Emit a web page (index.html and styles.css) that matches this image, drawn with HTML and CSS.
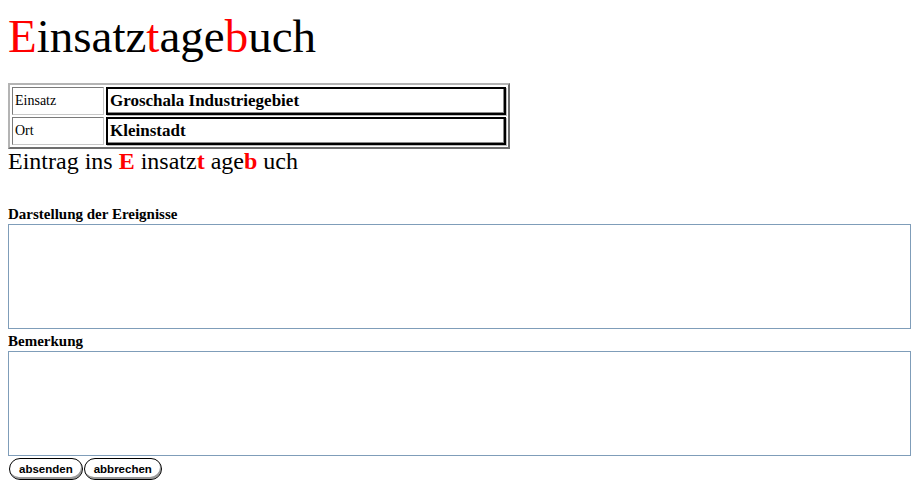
FILE: index.html
```html
<!DOCTYPE html>
<html lang="de">
<head>
<meta charset="utf-8">
<title>Einsatztagebuch</title>
<link rel="stylesheet" href="styles.css">
</head>
<body>
<h1 class="title"><span class="red">E</span>insatz<span class="red">t</span>age<span class="red">b</span>uch</h1>
<table class="info">
  <tr><td class="key">Einsatz</td><td class="val">Groschala Industriegebiet</td></tr>
  <tr><td class="key">Ort</td><td class="val">Kleinstadt</td></tr>
</table>
<div class="subtitle">Eintrag ins <b class="red">E</b> insatz<b class="red">t</b> age<b class="red">b</b> uch</div>
<form class="entry">
  <label class="lbl">Darstellung der Ereignisse</label>
  <textarea class="box"></textarea>
  <label class="lbl lbl2">Bemerkung</label>
  <textarea class="box"></textarea>
  <div class="buttons">
    <button type="button" class="btn">absenden</button><button type="button" class="btn">abbrechen</button>
  </div>
</form>
</body>
</html>
```
FILE: styles.css
```css
html, body { background: #fff; }
body {
  margin: 8px;
  font-family: "Liberation Serif", "Times New Roman", serif;
  color: #000;
}
.red { color: #ff0000; }
.title {
  margin: 2px 0 0 0;
  font-size: 47px;
  font-weight: normal;
  line-height: 52px;
}
.info {
  margin-top: 21px;
  width: 502px;
  border-collapse: separate;
  border-spacing: 2px;
  border: 2px solid;
  border-color: #b4b4b4 #6e6e6e #6e6e6e #b4b4b4;
}
.info td {
  height: 24px;
  padding: 0 2px;
}
.key {
  width: 86px;
  font-size: 14px;
  border: 1px solid;
  border-color: #7a7a7a #c8c8c8 #c8c8c8 #7a7a7a;
}
.val {
  font-size: 17px;
  font-weight: bold;
  border: 2px solid #000;
  box-shadow: inset -1px -1px 0 #888, 1px 1px 0 #bbb;
}
.subtitle {
  font-size: 24px;
  line-height: 24px;
}
.entry {
  margin-top: 32px;
  display: flex;
  flex-direction: column;
  align-items: flex-start;
}
.lbl {
  font-size: 15px;
  font-weight: bold;
  line-height: 19px;
}
.lbl2 { margin-top: 3px; }
.box {
  width: 903px;
  height: 105px;
  box-sizing: border-box;
  border: 1px solid #7f9db9;
  margin: 0;
  padding: 2px;
  resize: none;
}
.buttons {
  display: flex;
  gap: 1px;
  margin-top: 2px;
  padding-left: 1px;
}
.btn {
  font-family: "Liberation Sans", Arial, sans-serif;
  font-size: 11.5px;
  font-weight: bold;
  height: 22px;
  padding: 0 9px;
  background: #fff;
  border: 1px solid #000;
  border-radius: 11px;
  box-shadow: inset -1px -2px 0 #9a9a9a;
  color: #000;
}
```
